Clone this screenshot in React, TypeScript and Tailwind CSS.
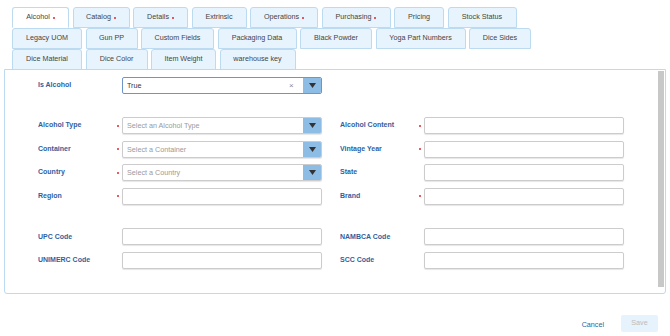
import React from 'react';

const tabRows: { label: string; w: number; req?: boolean; active?: boolean }[][] = [
  [
    { label: 'Alcohol', w: 57, req: true, active: true },
    { label: 'Catalog', w: 57, req: true },
    { label: 'Details', w: 55, req: true },
    { label: 'Extrinsic', w: 55 },
    { label: 'Operations', w: 68, req: true },
    { label: 'Purchasing', w: 69, req: true },
    { label: 'Pricing', w: 50 },
    { label: 'Stock Status', w: 69 },
  ],
  [
    { label: 'Legacy UOM', w: 70 },
    { label: 'Gun PP', w: 52 },
    { label: 'Custom Fields', w: 73 },
    { label: 'Packaging Data', w: 79 },
    { label: 'Black Powder', w: 72 },
    { label: 'Yoga Part Numbers', w: 90 },
    { label: 'Dice Sides', w: 62 },
  ],
  [
    { label: 'Dice Material', w: 70 },
    { label: 'Dice Color', w: 62 },
    { label: 'Item Weight', w: 65 },
    { label: 'warehouse key', w: 76 },
  ],
];

const Star = ({ show }: { show?: boolean }) => (
  <span className="w-[5px] flex items-center">
    {show && <span className="w-[2px] h-[2px] rounded-full bg-[#e0242a]" />}
  </span>
);

const Label = ({ text }: { text: string }) => (
  <span className="w-[79px] text-[7px] font-bold text-[#2f5f9e]">{text}</span>
);

const Caret = () => (
  <span className="w-[18px] flex items-center justify-center bg-[#8dbde5]">
    <svg width="7" height="5" viewBox="0 0 7 5">
      <polygon points="0,0 7,0 3.5,5" fill="#333" />
    </svg>
  </span>
);

const TextField = ({ label, req }: { label: string; req?: boolean }) => (
  <div className="flex items-center">
    <Label text={label} />
    <Star show={req} />
    <div className="w-[200px] h-[17px] rounded-[2px] border border-[#cccccc] bg-white shadow-[0_1px_1px_rgba(0,0,0,0.1)]" />
  </div>
);

const SelectField = ({ label, req, placeholder }: { label: string; req?: boolean; placeholder: string }) => (
  <div className="flex items-center">
    <Label text={label} />
    <Star show={req} />
    <div className="w-[200px] h-[17px] flex rounded-[2px] border border-[#cccccc] bg-white overflow-hidden shadow-[0_1px_1px_rgba(0,0,0,0.1)]">
      <span className="flex-1 pl-[4px] text-[7.2px] leading-[15px] text-[#9a9a9a]">{placeholder}</span>
      <Caret />
    </div>
  </div>
);

export default function App() {
  return (
    <div className="w-[670px] h-[336px] bg-white overflow-hidden font-['Liberation_Sans',Arial,sans-serif]">
      <div className="pt-[7px] pl-[12px]">
        {tabRows.map((row, i) => (
          <div key={i} className="flex gap-[3.5px]">
            {row.map((t) => (
              <div
                key={t.label}
                style={{ width: t.w }}
                className={
                  'h-[21px] flex items-center justify-center rounded-t-[3px] border border-[#bcdaf0] text-[7.2px] text-[#444] ' +
                  (t.active ? 'bg-white border-b-white' : 'bg-[#e8f4fd]')
                }
              >
                {t.label}
                {t.req && <span className="ml-[3px] w-[2px] h-[2px] rounded-full bg-[#e0242a]" />}
              </div>
            ))}
          </div>
        ))}
      </div>

      <div className="relative ml-[4px] w-[662px] -mt-px border border-[#bcdaf0] rounded-b-[3px] pl-[33px] pt-[7px] pb-[24px]">
        <div className="absolute right-[1px] top-[1px] w-[6px] h-[216px] bg-[#c8c8c8]" />

        <div className="flex items-center">
          <Label text="Is Alcohol" />
          <Star />
          <div className="w-[200px] h-[17px] flex rounded-[2px] border border-[#6e95c8] bg-white overflow-hidden">
            <span className="flex-1 pl-[4px] text-[7.2px] leading-[15px] text-[#333]">True</span>
            <span className="w-[14px] text-[8px] leading-[15px] text-[#888]">×</span>
            <Caret />
          </div>
        </div>

        <div className="mt-[23px] grid grid-cols-[284px_284px] gap-x-[18px] gap-y-[6.6px]">
          <SelectField label="Alcohol Type" req placeholder="Select an Alcohol Type" />
          <TextField label="Alcohol Content" req />
          <SelectField label="Container" req placeholder="Select a Container" />
          <TextField label="Vintage Year" req />
          <SelectField label="Country" req placeholder="Select a Country" />
          <TextField label="State" />
          <TextField label="Region" req />
          <TextField label="Brand" req />
        </div>

        <div className="mt-[23.5px] grid grid-cols-[284px_284px] gap-x-[18px] gap-y-[6.6px]">
          <TextField label="UPC Code" />
          <TextField label="NAMBCA Code" />
          <TextField label="UNIMERC Code" />
          <TextField label="SCC Code" />
        </div>
      </div>

      <div className="flex justify-end items-center gap-[17px] pr-[12px] mt-[21px]">
        <span className="mt-[4px] text-[7.2px] text-[#2f5f9e]">Cancel</span>
        <div className="w-[37px] h-[17px] flex items-center justify-center rounded-[2px] bg-[#e6f2fc] text-[7.2px] text-[#bcbcbc]">
          Save
        </div>
      </div>
    </div>
  );
}
